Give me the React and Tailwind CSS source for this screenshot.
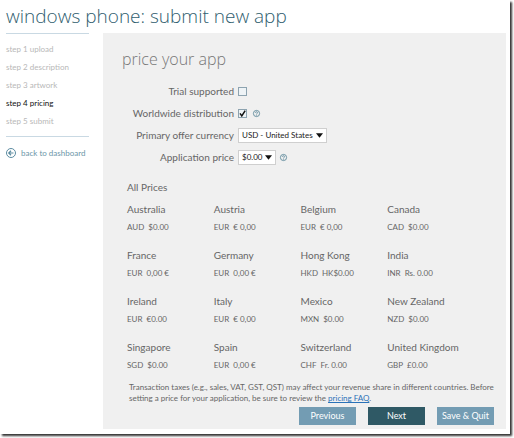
const steps = ['step 1 upload', 'step 2 description', 'step 3 artwork', 'step 4 pricing', 'step 5 submit'];
const currentStep = 3;

const prices = [
  { country: 'Australia', currency: 'AUD', price: '$0.00' },
  { country: 'Austria', currency: 'EUR', price: '€ 0,00' },
  { country: 'Belgium', currency: 'EUR', price: '€ 0,00' },
  { country: 'Canada', currency: 'CAD', price: '$0.00' },
  { country: 'France', currency: 'EUR', price: '0,00 €' },
  { country: 'Germany', currency: 'EUR', price: '0,00 €' },
  { country: 'Hong Kong', currency: 'HKD', price: 'HK$0.00' },
  { country: 'India', currency: 'INR', price: 'Rs. 0.00' },
  { country: 'Ireland', currency: 'EUR', price: '€0.00' },
  { country: 'Italy', currency: 'EUR', price: '€ 0,00' },
  { country: 'Mexico', currency: 'MXN', price: '$0.00' },
  { country: 'New Zealand', currency: 'NZD', price: '$0.00' },
  { country: 'Singapore', currency: 'SGD', price: '$0.00' },
  { country: 'Spain', currency: 'EUR', price: '0,00 €' },
  { country: 'Switzerland', currency: 'CHF', price: 'Fr. 0.00' },
  { country: 'United Kingdom', currency: 'GBP', price: '£0.00' },
];

function HelpIcon() {
  return (
    <svg viewBox="0 0 14 14" className="w-[7px] h-[7px] shrink-0 overflow-visible" fill="none" stroke="#4f7f92" strokeWidth="1.6">
      <circle cx="7" cy="7" r="6.2" />
      <path d="M5 5.6a2 2 0 1 1 3 1.7c-.7.4-1 .7-1 1.3" />
      <path d="M7 9.8v1.4" />
    </svg>
  );
}

function Row({ id, label, children }) {
  return (
    <div className="grid grid-cols-[112px_1fr] items-center gap-1 h-[22px]">
      <label htmlFor={id} className="text-right whitespace-nowrap">{label}</label>
      <div className="flex items-center gap-1">{children}</div>
    </div>
  );
}

function Check({ id, defaultChecked }) {
  return (
    <span className="relative flex w-[9px] h-[9px] mr-0.5">
      <input
        id={id}
        type="checkbox"
        defaultChecked={defaultChecked}
        className="peer appearance-none w-full h-full border border-[#8da3b0] bg-[#eef3f6]"
      />
      <svg viewBox="0 0 9 9" className="absolute inset-0 hidden peer-checked:block pointer-events-none" fill="none" stroke="#111" strokeWidth="1.5">
        <path d="M2 4.4 3.8 7 7.2 1.6" />
      </svg>
    </span>
  );
}

function Select({ id, className, children }) {
  return (
    <span className={`relative flex ${className}`}>
      <select
        id={id}
        className="appearance-none w-full h-[15px] pl-[3px] bg-white border border-[#cfcfcf] text-[8px] leading-3 text-[#222]"
      >
        {children}
      </select>
      <svg viewBox="0 0 8 5" className="absolute right-1 top-[5px] w-[7px] h-[5px] pointer-events-none" fill="#111">
        <path d="M0 0h8L4 5z" />
      </svg>
    </span>
  );
}

export default function App() {
  return (
    <div className="pr-1 pb-1 bg-white font-['Lato','Open_Sans',sans-serif]">
      <div className="bg-white shadow-[2px_2px_2px_#333] pr-1 pb-[5px]">
        <h1 className="pl-1.5 h-[33px] font-['Open_Sans',sans-serif] text-[19px] leading-8 font-light text-[#2f5d6e] whitespace-nowrap">
          windows phone: submit new app
        </h1>

        <div className="flex">
          <aside className="w-[103px] shrink-0 pl-1.5 pr-3.5 text-[8px]">
            <ol className="border-y border-[#c9d9e3] py-1.5">
              {steps.map((step, i) => (
                <li key={step} className={`h-[18px] leading-[18px] whitespace-nowrap ${i === currentStep ? 'text-[#111]' : 'text-[#b8b8b8]'}`}>
                  {step}
                </li>
              ))}
            </ol>
            <a href="#dashboard" className="mt-2.5 flex items-center gap-[5px] text-[#6b96a8] leading-3 whitespace-nowrap">
              <svg viewBox="0 0 20 20" className="w-2.5 h-2.5 shrink-0" fill="none" stroke="#5b8ba0" strokeWidth="2">
                <circle cx="10" cy="10" r="9" />
                <path d="M15 10H6M10 5.5 5.5 10l4.500 4.500" strokeWidth="2.400" />
              </svg>
              back to dashboard
            </a>
          </aside>

          <main className="flex-1 min-w-0 bg-[#f0f0f0] pt-3 pb-1 pl-[19px] pr-3 text-[#666]">
            <h2 className="h-[35px] font-['Open_Sans',sans-serif] text-[16px] leading-7 font-light text-[#777]">price your app</h2>

            <form className="text-[10px] leading-[14px]">
              <Row id="trial" label="Trial supported">
                <Check id="trial" />
              </Row>
              <Row id="worldwide" label="Worldwide distribution">
                <Check id="worldwide" defaultChecked />
                <HelpIcon />
              </Row>
              <Row id="currency" label="Primary offer currency">
                <Select id="currency" className="w-[89px]">
                  <option>USD - United States</option>
                </Select>
              </Row>
              <Row id="price" label="Application price">
                <Select id="price" className="w-[38px]">
                  <option>$0.00</option>
                </Select>
                <HelpIcon />
              </Row>
            </form>

            <section className="pl-[5px] pr-5 mt-3">
              <h3 className="text-[10px] leading-[14px]">All Prices</h3>
              <ul className="mt-2 grid grid-cols-4">
                {prices.map((p) => (
                  <li key={p.country} className="h-[46px] whitespace-nowrap">
                    <div className="text-[10px] leading-[14px]">{p.country}</div>
                    <div className="mt-1 flex gap-1 text-[8px] leading-[14px]">
                      <span>{p.currency}</span>
                      <span>{p.price}</span>
                    </div>
                  </li>
                ))}
              </ul>
            </section>

            <p className="-mt-1 pl-[7px] text-[8px] leading-[11px]">
              Transaction taxes (e.g., sales, VAT, GST, QST) may affect your revenue share in different countries. Before
              setting a price for your application, be sure to review the{' '}
              <a href="#faq" className="text-[#2a72b8] underline">pricing FAQ</a>.
            </p>

            <div className="mt-[3px] flex justify-end gap-3 text-[9px] leading-[18px] text-white">
              <button type="button" className="w-[57px] bg-[#739cb3]">Previous</button>
              <button type="button" className="w-[57px] bg-[#2f5965]">Next</button>
              <button type="button" className="w-[57px] bg-[#739cb3]">Save &amp; Quit</button>
            </div>
          </main>
        </div>
      </div>
    </div>
  );
}
